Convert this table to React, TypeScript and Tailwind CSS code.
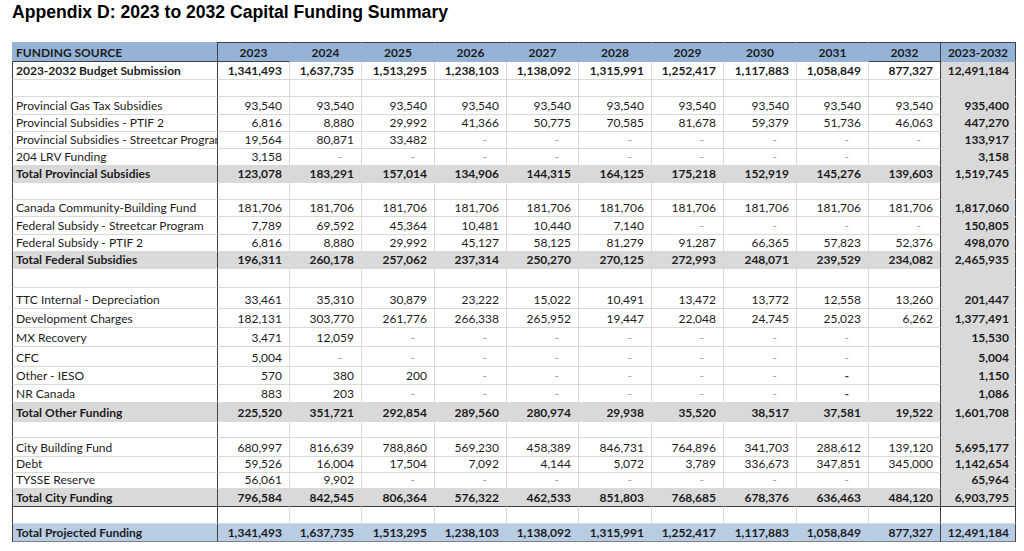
import React from "react";

type Kind = "header" | "budget" | "normal" | "empty" | "total" | "city" | "emptyWhite" | "grand";

interface RowData {
  kind: Kind;
  label: string;
  vals: string[];
  total: string;
  h: string;
}

const WIDTHS = [
  "w-[72px]",
  "w-[72px]",
  "w-[73px]",
  "w-[72px]",
  "w-[72px]",
  "w-[73px]",
  "w-[72px]",
  "w-[73px]",
  "w-[72px]",
  "w-[72px]",
];

const E = Array(10).fill("");

const rows: RowData[] = [
  {
    kind: "header",
    label: "FUNDING SOURCE",
    vals: ["2023", "2024", "2025", "2026", "2027", "2028", "2029", "2030", "2031", "2032"],
    total: "2023-2032",
    h: "h-[20px]",
  },
  {
    kind: "budget",
    label: "2023-2032 Budget Submission",
    vals: ["1,341,493", "1,637,735", "1,513,295", "1,238,103", "1,138,092", "1,315,991", "1,252,417", "1,117,883", "1,058,849", "877,327"],
    total: "12,491,184",
    h: "h-[18px]",
  },
  { kind: "empty", label: "", vals: E, total: "", h: "h-[17px]" },
  {
    kind: "normal",
    label: "Provincial Gas Tax Subsidies",
    vals: ["93,540", "93,540", "93,540", "93,540", "93,540", "93,540", "93,540", "93,540", "93,540", "93,540"],
    total: "935,400",
    h: "h-[18px]",
  },
  {
    kind: "normal",
    label: "Provincial Subsidies - PTIF 2",
    vals: ["6,816", "8,880", "29,992", "41,366", "50,775", "70,585", "81,678", "59,379", "51,736", "46,063"],
    total: "447,270",
    h: "h-[17px]",
  },
  {
    kind: "normal",
    label: "Provincial Subsidies - Streetcar Program",
    vals: ["19,564", "80,871", "33,482", "-", "-", "-", "-", "-", "-", "-"],
    total: "133,917",
    h: "h-[17px]",
  },
  {
    kind: "normal",
    label: "204 LRV Funding",
    vals: ["3,158", "-", "-", "-", "-", "-", "-", "-", "-", ""],
    total: "3,158",
    h: "h-[17px]",
  },
  {
    kind: "total",
    label: "Total Provincial Subsidies",
    vals: ["123,078", "183,291", "157,014", "134,906", "144,315", "164,125", "175,218", "152,919", "145,276", "139,603"],
    total: "1,519,745",
    h: "h-[17px]",
  },
  { kind: "empty", label: "", vals: E, total: "", h: "h-[17px]" },
  {
    kind: "normal",
    label: "Canada Community-Building Fund",
    vals: ["181,706", "181,706", "181,706", "181,706", "181,706", "181,706", "181,706", "181,706", "181,706", "181,706"],
    total: "1,817,060",
    h: "h-[17px]",
  },
  {
    kind: "normal",
    label: "Federal Subsidy - Streetcar Program",
    vals: ["7,789", "69,592", "45,364", "10,481", "10,440", "7,140", "-", "-", "-", "-"],
    total: "150,805",
    h: "h-[18px]",
  },
  {
    kind: "normal",
    label: "Federal Subsidy - PTIF 2",
    vals: ["6,816", "8,880", "29,992", "45,127", "58,125", "81,279", "91,287", "66,365", "57,823", "52,376"],
    total: "498,070",
    h: "h-[17px]",
  },
  {
    kind: "total",
    label: "Total Federal Subsidies",
    vals: ["196,311", "260,178", "257,062", "237,314", "250,270", "270,125", "272,993", "248,071", "239,529", "234,082"],
    total: "2,465,935",
    h: "h-[17px]",
  },
  { kind: "empty", label: "", vals: E, total: "", h: "h-[19px]" },
  {
    kind: "normal",
    label: "TTC Internal - Depreciation",
    vals: ["33,461", "35,310", "30,879", "23,222", "15,022", "10,491", "13,472", "13,772", "12,558", "13,260"],
    total: "201,447",
    h: "h-[21px]",
  },
  {
    kind: "normal",
    label: "Development Charges",
    vals: ["182,131", "303,770", "261,776", "266,338", "265,952", "19,447", "22,048", "24,745", "25,023", "6,262"],
    total: "1,377,491",
    h: "h-[19px]",
  },
  {
    kind: "normal",
    label: "MX Recovery",
    vals: ["3,471", "12,059", "-", "-", "-", "-", "-", "-", "-", ""],
    total: "15,530",
    h: "h-[19px]",
  },
  {
    kind: "normal",
    label: "CFC",
    vals: ["5,004", "-", "-", "-", "-", "-", "-", "-", "-", ""],
    total: "5,004",
    h: "h-[20px]",
  },
  {
    kind: "normal",
    label: "Other - IESO",
    vals: ["570", "380", "200", "-", "-", "-", "-", "-", "--", ""],
    total: "1,150",
    h: "h-[18px]",
  },
  {
    kind: "normal",
    label: "NR Canada",
    vals: ["883", "203", "-", "-", "-", "-", "-", "-", "--", ""],
    total: "1,086",
    h: "h-[18px]",
  },
  {
    kind: "total",
    label: "Total Other Funding",
    vals: ["225,520", "351,721", "292,854", "289,560", "280,974", "29,938", "35,520", "38,517", "37,581", "19,522"],
    total: "1,601,708",
    h: "h-[19px]",
  },
  { kind: "empty", label: "", vals: E, total: "", h: "h-[16px]" },
  {
    kind: "normal",
    label: "City Building Fund",
    vals: ["680,997", "816,639", "788,860", "569,230", "458,389", "846,731", "764,896", "341,703", "288,612", "139,120"],
    total: "5,695,177",
    h: "h-[19px]",
  },
  {
    kind: "normal",
    label: "Debt",
    vals: ["59,526", "16,004", "17,504", "7,092", "4,144", "5,072", "3,789", "336,673", "347,851", "345,000"],
    total: "1,142,654",
    h: "h-[16px]",
  },
  {
    kind: "normal",
    label: "TYSSE Reserve",
    vals: ["56,061", "9,902", "-", "-", "-", "-", "-", "-", "-", ""],
    total: "65,964",
    h: "h-[16px]",
  },
  {
    kind: "city",
    label: "Total City Funding",
    vals: ["796,584", "842,545", "806,364", "576,322", "462,533", "851,803", "768,685", "678,376", "636,463", "484,120"],
    total: "6,903,795",
    h: "h-[18px]",
  },
  { kind: "emptyWhite", label: "", vals: E, total: "", h: "h-[17px]" },
  {
    kind: "grand",
    label: "Total Projected Funding",
    vals: ["1,341,493", "1,637,735", "1,513,295", "1,238,103", "1,138,092", "1,315,991", "1,252,417", "1,117,883", "1,058,849", "877,327"],
    total: "12,491,184",
    h: "h-[18px]",
  },
];

function fillFor(kind: Kind): string {
  if (kind === "header") return "bg-[#95b3d7]";
  if (kind === "grand") return "bg-[#b8cce4]";
  if (kind === "total" || kind === "city") return "bg-[#d9d9d9]";
  return "bg-white";
}

function bottomFor(kind: Kind): string {
  if (kind === "city") return "border-b-[#404040]";
  if (kind === "grand") return "border-b-[#7f7f7f]";
  if (kind === "header") return "border-b-[#95b3d7]";
  return "border-b-[#d9d9d9]";
}

function innerRightFor(kind: Kind): string {
  if (kind === "header") return "border-r-[#95b3d7]";
  if (kind === "grand") return "border-r-[#b8cce4]";
  return "border-r-[#d9d9d9]";
}

function Row({ r }: { r: RowData }) {
  const bold = r.kind !== "normal" && r.kind !== "empty" && r.kind !== "emptyWhite";
  const fill = fillFor(r.kind);
  const bottom = bottomFor(r.kind);
  const totalFill =
    r.kind === "header"
      ? "bg-[#95b3d7]"
      : r.kind === "grand"
      ? "bg-[#b8cce4]"
      : r.kind === "emptyWhite"
      ? "bg-white"
      : "bg-[#d9d9d9]";
  const totalBottom =
    r.kind === "city"
      ? "border-b-[#404040]"
      : r.kind === "grand"
      ? "border-b-[#7f7f7f]"
      : r.kind === "header"
      ? "border-b-[#95b3d7]"
      : "border-b-[#d9d9d9]";

  return (
    <div className={`flex ${r.h}`}>
      <div
        className={`w-[206px] shrink-0 h-full border-l border-r border-b border-r-[#404040] ${
          r.kind === "header" ? "border-l-[#95b3d7] border-b-[#404040]" : `border-l-[#404040] ${bottom}`
        } ${fill} flex items-end pl-[3px] pb-[1px] overflow-hidden whitespace-nowrap`}
      >
        <span className={`${bold ? "font-bold" : "font-normal"} text-[12px] leading-[14px] text-[#1c1c1c]`}>
          {r.label}
        </span>
      </div>
      {r.vals.map((v, i) => {
        const isLast = i === 9;
        const rightCls = isLast ? "border-r-[#404040]" : innerRightFor(r.kind);
        let bottomCls = bottom;
        if (r.kind === "header" && (i === 0 || i === 9)) bottomCls = "border-b-[#404040]";
        const topCls = r.kind === "header" ? "border-t border-t-[#404040]" : "";
        const isDash = v === "-" || v === "--";
        return (
          <div
            key={i}
            className={`${WIDTHS[i]} shrink-0 h-full border-r border-b ${rightCls} ${bottomCls} ${topCls} ${fill} flex items-end pb-[1px] ${
              r.kind === "header" ? "justify-center" : isDash ? "justify-end pr-[19px]" : "justify-end pr-[7px]"
            }`}
          >
            {v === "-" ? (
              <span className="text-[12px] leading-[14px] text-[#9a9a9a]">-</span>
            ) : v === "--" ? (
              <span className="text-[12px] leading-[14px] font-bold text-[#333333]">-</span>
            ) : (
              <span className={`${bold ? "font-bold" : "font-normal"} text-[12px] leading-[14px] text-[#1c1c1c]`}>{v}</span>
            )}
          </div>
        );
      })}
      <div
        className={`w-[75px] shrink-0 h-full border-r border-b border-r-[#404040] ${totalBottom} ${
          r.kind === "header" ? "border-t border-t-[#404040]" : ""
        } ${totalFill} flex items-end pb-[1px] ${r.kind === "header" ? "justify-center" : "justify-end pr-[6px]"}`}
      >
        <span
          className={`${r.kind === "empty" || r.kind === "emptyWhite" ? "" : "font-bold"} text-[12px] leading-[14px] text-[#1c1c1c]`}
        >
          {r.total}
        </span>
      </div>
    </div>
  );
}

export default function App() {
  return (
    <div className="w-[1024px] h-[551px] bg-white overflow-hidden font-['Lato',sans-serif]">
      <div className="pl-[12px] pt-[3px]">
        <h1 className="font-['Liberation_Sans',Arial,sans-serif] font-bold text-[17.6px] leading-[18px] text-black">
          Appendix D: 2023 to 2032 Capital Funding Summary
        </h1>
      </div>
      <div className="ml-[12px] mt-[21px] flex flex-col w-[1004px]">
        {rows.map((r, idx) => (
          <Row key={idx} r={r} />
        ))}
      </div>
    </div>
  );
}
